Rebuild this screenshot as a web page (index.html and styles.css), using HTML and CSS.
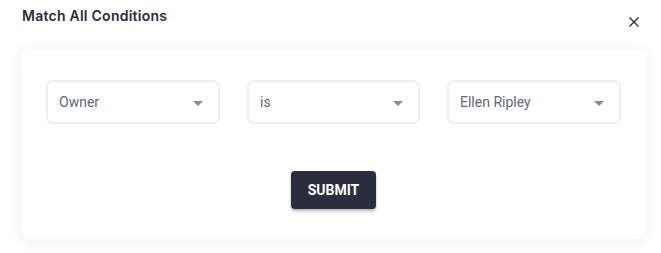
FILE: index.html
```html
<!DOCTYPE html>
<html>
<head>
<meta charset="utf-8">
<link rel="stylesheet" href="styles.css">
</head>
<body>
<div class="dialog">
  <div class="header">
    <h1 class="title">Match All Conditions</h1>
    <button class="close" aria-label="Close">
      <svg width="12" height="12" viewBox="0 0 12 12"><path d="M1.5 1.5L10.5 10.5M10.5 1.5L1.5 10.5" stroke="#2b2d3a" stroke-width="1.4" fill="none"/></svg>
    </button>
  </div>
  <div class="card">
    <div class="row">
      <div class="select"><span class="value">Owner</span><span class="caret"></span></div>
      <div class="select"><span class="value">is</span><span class="caret"></span></div>
      <div class="select"><span class="value">Ellen Ripley</span><span class="caret"></span></div>
    </div>
    <div class="actions">
      <button class="submit">SUBMIT</button>
    </div>
  </div>
</div>
</body>
</html>
```
FILE: styles.css
```css
* { box-sizing: border-box; }
html, body { margin: 0; padding: 0; background: #fff; }
body { width: 661px; height: 253px; overflow: hidden; font-family: Roboto, "Liberation Sans", sans-serif; }
.dialog { padding: 6px 15px 0 21px; }
.header { display: flex; align-items: flex-start; justify-content: space-between; height: 43px; }
.title { margin: 0; padding-left: 1px; font-family: Inter, "Open Sans", sans-serif; font-weight: 600; font-size: 14px; line-height: 20px; color: #2a2b3b; letter-spacing: 0.25px; }
.close { margin-top: 9px; width: 24px; height: 14px; padding: 0; border: 0; background: none; display: flex; align-items: center; justify-content: center; }
.card { width: 625px; height: 190px; background: #fff; border-radius: 10px; box-shadow: 0 2px 16px rgba(0,0,0,0.07); padding: 31px 25px 0 25px; }
.row { display: flex; gap: 27px; }
.select { width: 174px; height: 44px; border: 2px solid #efeff1; border-radius: 7px; display: flex; align-items: center; justify-content: space-between; padding: 0 15px 0 11px; }
.select:nth-child(2) { width: 173px; }
.value { font-size: 14px; color: #62677c; }
.caret { width: 0; height: 0; border-left: 5px solid transparent; border-right: 5px solid transparent; border-top: 5px solid #8a8a8e; margin-top: 2px; }
.actions { display: flex; justify-content: center; margin-top: 47px; }
.submit { width: 85px; height: 38px; background: #2a2d3e; color: #fff; border: 0; border-radius: 4px; font-family: Roboto, "Liberation Sans", sans-serif; font-weight: 700; font-size: 14px; box-shadow: 0 2px 3px rgba(0,0,0,0.3); }
```
